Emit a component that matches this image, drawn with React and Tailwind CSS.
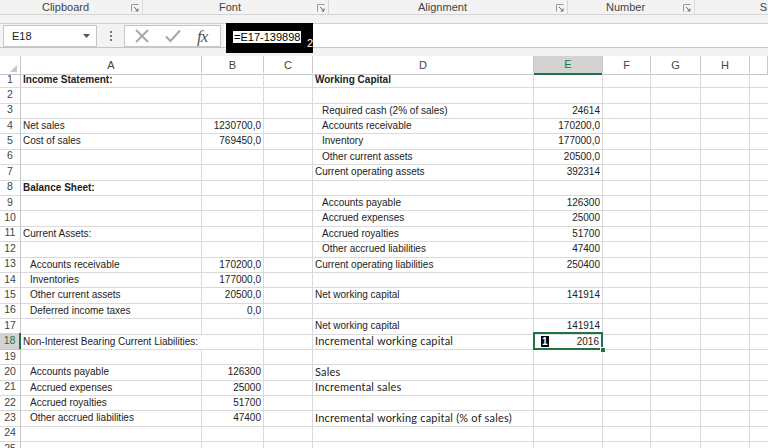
import React from 'react';

const COLS = ['A', 'B', 'C', 'D', 'E', 'F', 'G', 'H', ''];
const GRID = 'grid grid-cols-[21px_181px_62px_49px_221px_69px_48px_50px_49px_1fr]';

// row -> { a, b, d, e, ai (indent a), di (indent d), ab (bold a), db (bold d), dc (calibri d) }
const rows = {
  1: { a: 'Income Statement:', ab: true, d: 'Working Capital', db: true },
  3: { d: 'Required cash (2% of sales)', di: true, e: '24614' },
  4: { a: 'Net sales', b: '1230700,0', d: 'Accounts receivable', di: true, e: '170200,0' },
  5: { a: 'Cost of sales', b: '769450,0', d: 'Inventory', di: true, e: '177000,0' },
  6: { d: 'Other current assets', di: true, e: '20500,0' },
  7: { d: 'Current operating assets', e: '392314' },
  8: { a: 'Balance Sheet:', ab: true },
  9: { d: 'Accounts payable', di: true, e: '126300' },
  10: { d: 'Accrued expenses', di: true, e: '25000' },
  11: { a: 'Current Assets:', d: 'Accrued royalties', di: true, e: '51700' },
  12: { d: 'Other accrued liabilities', di: true, e: '47400' },
  13: { a: 'Accounts receivable', ai: true, b: '170200,0', d: 'Current operating liabilities', e: '250400' },
  14: { a: 'Inventories', ai: true, b: '177000,0' },
  15: { a: 'Other current assets', ai: true, b: '20500,0', d: 'Net working capital', e: '141914' },
  16: { a: 'Deferred income taxes', ai: true, b: '0,0' },
  17: { d: 'Net working capital', e: '141914' },
  18: { a: 'Non-Interest Bearing Current Liabilities:', d: 'Incremental working capital', dc: true, e: '2016' },
  20: { a: 'Accounts payable', ai: true, b: '126300', d: 'Sales', dc: true },
  21: { a: 'Accrued expenses', ai: true, b: '25000', d: 'Incremental sales', dc: true },
  22: { a: 'Accrued royalties', ai: true, b: '51700' },
  23: { a: 'Other accrued liabilities', ai: true, b: '47400', d: 'Incremental working capital (% of sales)', dc: true },
};

function Launcher() {
  return (
    <svg width="8" height="8" viewBox="0 0 8 8" className="shrink-0">
      <path d="M0.5 7.5V0.5H7.5" fill="none" stroke="#9a9a9a" strokeWidth="1" />
      <path d="M3 3L7 7M7 4.5V7H4.5" fill="none" stroke="#6a6a6a" strokeWidth="1" />
    </svg>
  );
}

function Group({ label, w, last }) {
  return (
    <div className={`flex items-center h-full ${w} ${last ? '' : 'border-r border-[#d8d8d8]'}`}>
      <div className="flex-1 text-center">{label}</div>
      {!last && <div className="pr-[3px] pt-[2px]"><Launcher /></div>}
    </div>
  );
}

function Row({ n }) {
  const r = rows[n] || {};
  const sel = n === 18;
  const cell = 'border-r border-b border-[#dadada] flex items-center overflow-hidden whitespace-nowrap';
  return (
    <div className={`${GRID} h-[15.4px]`}>
      <div
        className={`flex items-center justify-center border-b text-[10.5px] ${
          sel
            ? 'bg-[#d3d3d3] text-[#217346] border-b-[#c6c6c6] border-r-2 border-r-[#217346]'
            : 'text-[#444] border-[#dadada] border-r border-r-[#c6c6c6]'
        }`}
      >
        {n}
      </div>
      <div
        className={`border-b border-[#dadada] flex items-center whitespace-nowrap ${
          sel ? 'overflow-visible relative z-10' : 'border-r overflow-hidden'
        } ${r.ai ? 'pl-[9px]' : 'pl-[2px]'} ${r.ab ? 'font-bold' : ''}`}
      >
        {r.a}
      </div>
      <div className={`${cell} justify-end pr-[2px]`}>{r.b}</div>
      <div className={cell}></div>
      <div
        className={`${cell} ${r.di ? 'pl-[9px]' : 'pl-[2px]'} ${r.db ? 'font-bold' : ''} ${
          r.dc ? "font-['Lato',sans-serif] text-[11px] tracking-[0.2px]" : ''
        }`}
      >
        {r.d}
      </div>
      {sel ? (
        <div className="relative border-r border-b border-[#dadada]">
          <div className="absolute inset-[-1px] border-2 border-[#217346] flex items-center justify-between pl-[6px] pr-[2px]">
            <span className="bg-black text-white font-bold text-[10px] leading-[11px] px-[1px]">1</span>
            <span>{r.e}</span>
          </div>
          <div className="absolute right-[-4px] bottom-[-4px] w-[6px] h-[6px] bg-[#217346] border border-white" />
        </div>
      ) : (
        <div className={`${cell} justify-end pr-[2px]`}>{r.e}</div>
      )}
      <div className={cell}></div>
      <div className={cell}></div>
      <div className={cell}></div>
      <div className="border-b border-[#dadada]"></div>
    </div>
  );
}

export default function App() {
  const nums = Array.from({ length: 25 }, (_, i) => i + 1);
  return (
    <div className="w-[768px] h-[448px] overflow-hidden bg-white font-['Liberation_Sans',Arial,sans-serif] text-[10px] text-[#222]">
      {/* ribbon group labels */}
      <div className="flex h-[15px] bg-[#f3f3f3] border-b border-[#d4d4d4] text-[11px] text-[#444]">
        <Group label="Clipboard" w="w-[143px]" />
        <Group label="Font" w="w-[186px]" />
        <Group label="Alignment" w="w-[239px]" />
        <Group label="Number" w="w-[127px]" />
        <div className="flex-1 flex items-center justify-end pr-[1px]">S</div>
      </div>

      <div className="h-[9px] bg-[#f3f3f3] border-b border-[#d0d0d0]" />

      {/* formula bar */}
      <div className="relative flex h-[24px] bg-[#f3f3f3] border-b border-[#c6c6c6]">
        <div className="ml-[3px] mt-[1px] w-[94px] h-[22px] bg-white border border-[#c6c6c6] flex items-center justify-between pl-[8px] pr-[6px] text-[11px] text-[#222]">
          <span>E18</span>
          <svg width="7" height="4" viewBox="0 0 7 4">
            <path d="M0 0H7L3.5 4Z" fill="#555" />
          </svg>
        </div>
        <div className="w-[27px] flex flex-col items-center justify-center gap-[2px]">
          <div className="w-[2px] h-[2px] bg-[#777]" />
          <div className="w-[2px] h-[2px] bg-[#777]" />
          <div className="w-[2px] h-[2px] bg-[#777]" />
        </div>
        <div className="mt-[1px] w-[97px] h-[22px] bg-white border border-[#c6c6c6] flex items-center pl-[10px] gap-[16px]">
          <svg width="14" height="14" viewBox="0 0 14 14">
            <path d="M1 1L13 13M13 1L1 13" stroke="#a6a6a6" strokeWidth="1.8" />
          </svg>
          <svg width="16" height="14" viewBox="0 0 16 14">
            <path d="M1 7.5L5.5 12L15 1.5" fill="none" stroke="#a6a6a6" strokeWidth="2" />
          </svg>
          <span className="font-['Liberation_Serif',serif] italic text-[17px] leading-none text-[#555] tracking-[-1px]">fx</span>
        </div>
        <div className="flex-1 ml-[3px] bg-white" />
        <div className="absolute left-[226px] top-[-1px] w-[87px] h-[30px] bg-black">
          <div className="absolute left-[7px] top-[8px] h-[12px] bg-white text-black text-[11px] leading-[12px] px-[1px]">
            =E17-139898
          </div>
          <div className="absolute left-[81px] top-[14px] text-white text-[11px] leading-[12px]">2</div>
        </div>
      </div>

      <div className="h-[8px] bg-[#f3f3f3]" />

      {/* column headers */}
      <div className={`${GRID} h-[15.5px] text-[11px] text-[#444] bg-white`}>
        <div className="relative border-r border-b border-[#c6c6c6]">
          <svg width="7" height="7" viewBox="0 0 7 7" className="absolute right-[3px] bottom-[2px]">
            <path d="M7 0V7H0Z" fill="#c8c8c8" />
          </svg>
        </div>
        {COLS.map((c, i) =>
          c === 'E' ? (
            <div key={i} className="flex items-center justify-center bg-[#d3d3d3] text-[#217346] border-r border-[#c6c6c6] border-b-2 border-b-[#217346]">
              {c}
            </div>
          ) : (
            <div key={i} className="flex items-center justify-center border-r border-b border-[#c6c6c6]">
              {c}
            </div>
          )
        )}
      </div>

      {nums.map((n) => (
        <Row key={n} n={n} />
      ))}
    </div>
  );
}
